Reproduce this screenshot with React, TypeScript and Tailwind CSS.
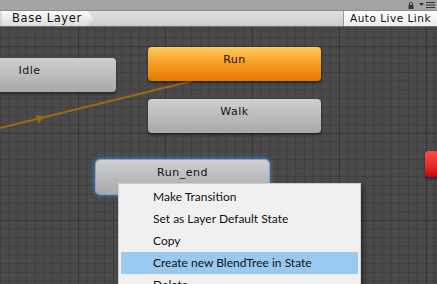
const menuItems = [
  "Make Transition",
  "Set as Layer Default State",
  "Copy",
  "Create new BlendTree in State",
  "Delete",
];

function StateNode({
  label,
  className,
  tone = "grey",
  selected = false,
}: {
  label: string;
  className: string;
  tone?: "grey" | "orange";
  selected?: boolean;
}) {
  const toneClass =
    tone === "orange"
      ? "bg-gradient-to-b from-[#ffcb5c] via-[#f79a1e] to-[#e77800]"
      : "bg-gradient-to-b from-[#cfcfcf] to-[#a9a9a9]";
  const shadowClass = selected
    ? "shadow-[0_0_0_1px_rgba(120,175,235,0.9),0_0_4px_2px_rgba(80,150,230,0.55)]"
    : "shadow-[0_2px_3px_rgba(0,0,0,0.45)]";
  return (
    <div
      className={`absolute flex h-[34px] w-[173px] justify-center rounded-[4px] pt-[5px] text-[11px] tracking-[0.5px] text-[#111] ${toneClass} ${shadowClass} ${className}`}
    >
      {label}
    </div>
  );
}

export default function App() {
  return (
    <div className="relative h-[284px] w-[437px] overflow-hidden bg-[#474747] font-['DejaVu_Sans',sans-serif]">
      {/* Window top strip */}
      <div className="flex h-[11px] items-center justify-end gap-[5px] border-b border-[#8a8a8a] bg-[#a4a4a4] pr-[2px]">
        <svg width="6" height="7" viewBox="0 0 6 7">
          <path d="M1.5 3V2a1.5 1.5 0 0 1 3 0v1" fill="none" stroke="#333" strokeWidth="1" />
          <rect x="0.5" y="3" width="5" height="4" fill="#333" />
        </svg>
        <svg width="16" height="8" viewBox="0 0 16 8">
          <path d="M0 2h5L2.5 5z" fill="#333" />
          <path d="M7 1.5h9M7 4h9M7 6.5h9" stroke="#333" strokeWidth="1" />
        </svg>
      </div>

      {/* Breadcrumb bar */}
      <div className="flex h-[16px] items-stretch justify-between border-b border-[#6f6f6f] bg-gradient-to-b from-[#e2e2e2] to-[#cbcbcb]">
        <div className="relative ml-[2px] flex items-center bg-gradient-to-b from-[#fbfbfb] to-[#dcdcdc] pl-[10px] pr-[12px] text-[11.5px] tracking-[0.6px] text-[#111] [clip-path:polygon(0_0,calc(100%-6px)_0,100%_50%,calc(100%-6px)_100%,0_100%)]">
          Base Layer
        </div>
        <div className="flex items-center border-l border-[#9a9a9a] bg-gradient-to-b from-[#fdfdfd] to-[#ececec] px-[6px] text-[10.5px] tracking-[0.5px] text-[#111]">
          Auto Live Link
        </div>
      </div>

      {/* Graph canvas */}
      <div className="relative h-[257px] w-full bg-[#4a4a4a] bg-[image:linear-gradient(to_right,#363636_1px,transparent_1px),linear-gradient(to_bottom,#363636_1px,transparent_1px),linear-gradient(to_right,#3f3f3f_1px,transparent_1px),linear-gradient(to_bottom,#3f3f3f_1px,transparent_1px)] bg-[size:87px_87px,87px_87px,8.7px_8.7px,8.7px_8.7px] bg-[position:78px_19px,78px_19px,78px_19px,78px_19px]">
        <svg className="absolute left-0 top-0" width="437" height="257" viewBox="0 0 437 257">
          <line x1="0" y1="101" x2="192" y2="54" stroke="#9c6a10" strokeWidth="2" />
          <path d="M45 89.8 L36 88.2 L38.2 96.2 Z" fill="#9c6a10" />
        </svg>

        <StateNode label="Idle" className="left-[-57px] top-[31px]" />
        <StateNode label="Run" tone="orange" className="left-[148px] top-[20px]" />
        <StateNode label="Walk" className="left-[148px] top-[72px]" />
        <StateNode label="Run_end" selected className="left-[96px] top-[133px]" />

        <div className="absolute left-[425px] top-[124px] h-[26px] w-[20px] rounded-[4px] bg-gradient-to-b from-[#ff4a4a] to-[#c80000] shadow-[0_2px_3px_rgba(0,0,0,0.45)]" />

        {/* Context menu */}
        <div className="absolute left-[118px] top-[156px] w-[243px] border border-[#cfcfcf] bg-[#f0f0f0] px-[2px] pt-[2px] font-['Lato',sans-serif] text-[12px] text-[#111] shadow-[3px_3px_3px_rgba(0,0,0,0.35)]">
          {menuItems.map((item, i) => (
            <div
              key={item}
              className={`flex h-[22px] items-center pl-[32px] ${i === 3 ? "bg-[#99c9ef]" : ""}`}
            >
              {item}
            </div>
          ))}
        </div>
      </div>
    </div>
  );
}
